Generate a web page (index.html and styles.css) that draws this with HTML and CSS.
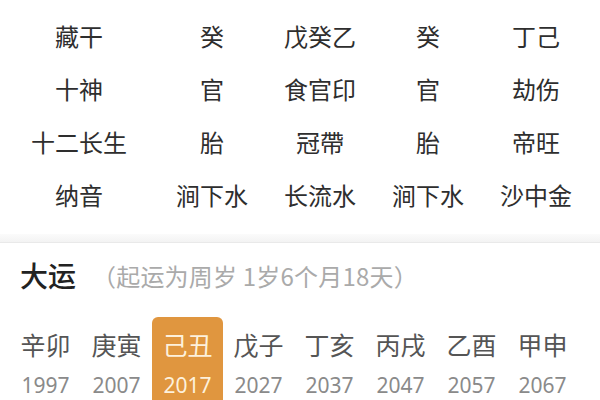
FILE: index.html
```html
<!DOCTYPE html>
<html lang="zh">
<head>
<meta charset="utf-8">
<link rel="stylesheet" href="styles.css">
</head>
<body>
<div class="page">
  <div class="table">
    <div class="row"><div class="label">藏干</div><div>癸</div><div>戊癸乙</div><div>癸</div><div>丁己</div></div>
    <div class="row"><div class="label">十神</div><div>官</div><div>食官印</div><div>官</div><div>劫伤</div></div>
    <div class="row"><div class="label">十二长生</div><div>胎</div><div>冠帶</div><div>胎</div><div>帝旺</div></div>
    <div class="row"><div class="label">纳音</div><div>涧下水</div><div>长流水</div><div>涧下水</div><div>沙中金</div></div>
  </div>
  <div class="divider"></div>
  <div class="dayun">
    <div class="title"><span class="big">大运</span><span class="sub">（起运为周岁 1岁6个月18天）</span></div>
    <div class="list">
      <div class="item"><div class="gz">辛卯</div><div class="yr">1997</div></div>
      <div class="item"><div class="gz">庚寅</div><div class="yr">2007</div></div>
      <div class="item active"><div class="gz">己丑</div><div class="yr">2017</div></div>
      <div class="item"><div class="gz">戊子</div><div class="yr">2027</div></div>
      <div class="item"><div class="gz">丁亥</div><div class="yr">2037</div></div>
      <div class="item"><div class="gz">丙戌</div><div class="yr">2047</div></div>
      <div class="item"><div class="gz">乙酉</div><div class="yr">2057</div></div>
      <div class="item"><div class="gz">甲申</div><div class="yr">2067</div></div>
    </div>
  </div>
</div>
</body>
</html>
```
FILE: styles.css
```css
html, body {
  margin: 0;
  padding: 0;
  background: #fff;
  overflow: hidden;
}
body {
  font-family: "Noto Sans CJK SC", "Noto Sans", sans-serif;
  width: 600px;
  height: 400px;
}
.page {
  width: 600px;
}
.table {
  padding-top: 9px;
  padding-bottom: 12px;
}
.row {
  display: grid;
  grid-template-columns: 158px 108px 108px 108px 108px;
  height: 53px;
  align-items: center;
  font-size: 24px;
  color: #2e2e2e;
}
.row > div {
  text-align: center;
  line-height: 53px;
  white-space: nowrap;
}
.divider {
  height: 8px;
  margin-top: 1px;
  background: linear-gradient(#fbfbfb, #f3f3f3);
  border-bottom: 1px solid #e9e9e9;
}
.dayun {
  padding-top: 12px;
}
.title {
  display: flex;
  align-items: center;
  height: 40px;
  padding-left: 20px;
  gap: 16px;
}
.big {
  font-size: 28px;
  font-weight: 500;
  color: #222;
}
.sub {
  font-size: 24px;
  color: #aaa;
  letter-spacing: 0.2px;
}
.list {
  display: flex;
  padding-left: 10px;
  margin-top: 22px;
}
.item {
  width: 71px;
  flex: none;
  text-align: center;
  height: 90px;
  border-radius: 6px 6px 0 0;
}
.item .gz {
  font-size: 25px;
  color: #555;
  margin-top: 11px;
  line-height: 32px;
}
.item .yr {
  font-size: 21px;
  color: #8a8a8a;
  margin-top: 13px;
  line-height: 24px;
  font-family: "Noto Sans", sans-serif;
}
.item.active {
  background: #e0963f;
}
.item.active .gz,
.item.active .yr {
  color: #fdf1dc;
}
```
